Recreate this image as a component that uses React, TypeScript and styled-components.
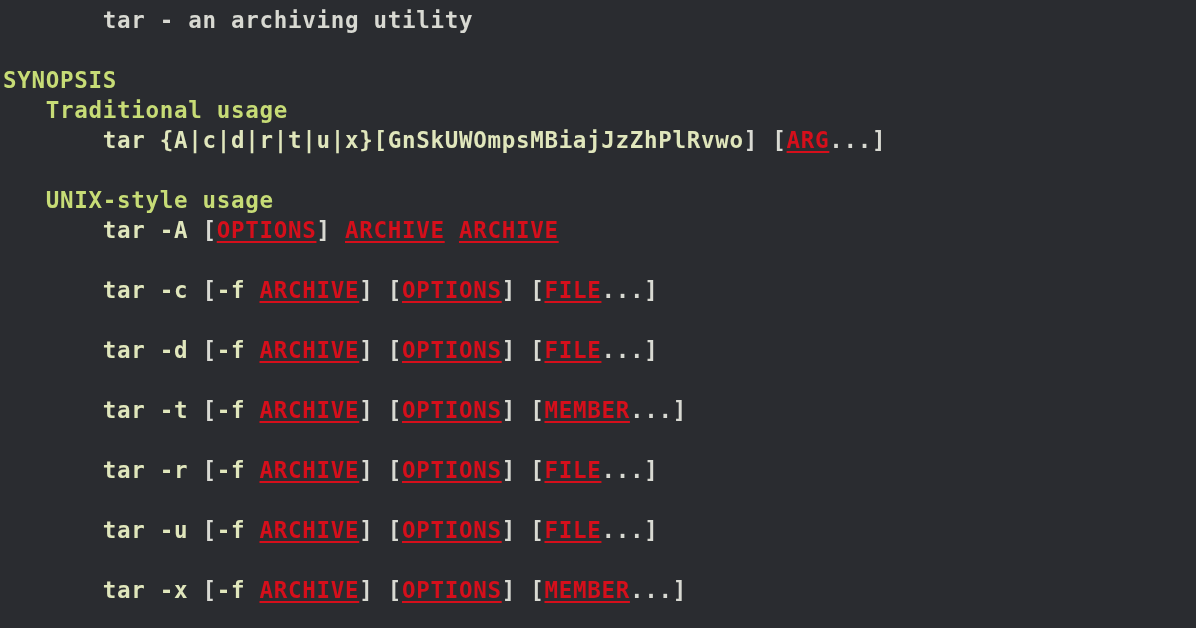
import React from "react";
import styled, { createGlobalStyle } from "styled-components";

const CELL = 14.25;

const Global = createGlobalStyle`
  html, body {
    margin: 0;
    padding: 0;
    background: #2a2c30;
    overflow: hidden;
  }
`;

const Terminal = styled.main`
  width: 1196px;
  height: 628px;
  box-sizing: border-box;
  padding: 5px 0 0 3px;
  background: #2a2c30;
  overflow: hidden;
  font-family: "DejaVu Sans Mono", "Liberation Mono", monospace;
  font-weight: bold;
  font-size: 22.5px;
  letter-spacing: 0.7px;
  color: #d6d7cf;
  filter: blur(0.45px);
`;

const Line = styled.div<{ $indent: number }>`
  height: 30px;
  line-height: 30px;
  white-space: pre;
  padding-left: ${(p) => p.$indent * CELL}px;
`;

const Plain = styled.span`
  color: #d8d9d2;
`;

const Bold = styled.span`
  color: #e0e6bc;
`;

const Heading = styled.span`
  color: #c7dc76;
`;

const Arg = styled.span`
  color: #d50f1b;
  text-decoration: underline;
  text-decoration-color: #d50f1b;
  text-decoration-thickness: 2px;
  text-underline-offset: 3px;
`;

type Kind = "p" | "b" | "h" | "u";
type Seg = [Kind, string];
type Row = { indent: number; segs: Seg[] };

const seg = (k: Kind, t: string): Seg => [k, t];

const unixLine = (flag: string, last: string): Row => ({
  indent: 7,
  segs: [
    seg("b", "tar " + flag),
    seg("p", " ["),
    seg("b", "-f"),
    seg("p", " "),
    seg("u", "ARCHIVE"),
    seg("p", "] ["),
    seg("u", "OPTIONS"),
    seg("p", "] ["),
    seg("u", last),
    seg("p", "...]"),
  ],
});

const blank: Row = { indent: 0, segs: [] };

const rows: Row[] = [
  { indent: 7, segs: [seg("p", "tar - an archiving utility")] },
  blank,
  { indent: 0, segs: [seg("h", "SYNOPSIS")] },
  { indent: 3, segs: [seg("h", "Traditional usage")] },
  {
    indent: 7,
    segs: [
      seg("b", "tar {A|c|d|r|t|u|x}[GnSkUWOmpsMBiajJzZhPlRvwo"),
      seg("p", "] ["),
      seg("u", "ARG"),
      seg("p", "...]"),
    ],
  },
  blank,
  { indent: 3, segs: [seg("h", "UNIX-style usage")] },
  {
    indent: 7,
    segs: [
      seg("b", "tar -A"),
      seg("p", " ["),
      seg("u", "OPTIONS"),
      seg("p", "] "),
      seg("u", "ARCHIVE"),
      seg("p", " "),
      seg("u", "ARCHIVE"),
    ],
  },
  blank,
  unixLine("-c", "FILE"),
  blank,
  unixLine("-d", "FILE"),
  blank,
  unixLine("-t", "MEMBER"),
  blank,
  unixLine("-r", "FILE"),
  blank,
  unixLine("-u", "FILE"),
  blank,
  unixLine("-x", "MEMBER"),
];

const renderSeg = ([k, t]: Seg, i: number) => {
  switch (k) {
    case "b":
      return <Bold key={i}>{t}</Bold>;
    case "h":
      return <Heading key={i}>{t}</Heading>;
    case "u":
      return <Arg key={i}>{t}</Arg>;
    default:
      return <Plain key={i}>{t}</Plain>;
  }
};

export default function App() {
  return (
    <>
      <Global />
      <Terminal>
        {rows.map((r, i) => (
          <Line key={i} $indent={r.indent}>
            {r.segs.map(renderSeg)}
          </Line>
        ))}
      </Terminal>
    </>
  );
}
